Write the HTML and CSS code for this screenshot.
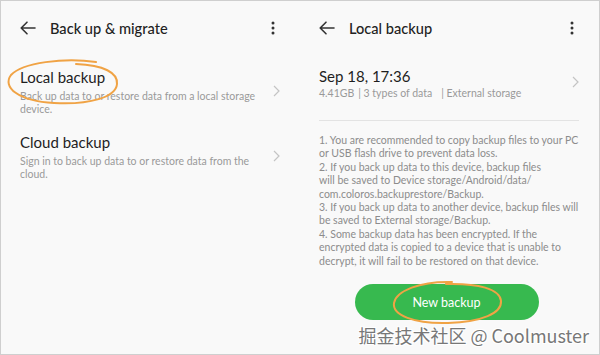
FILE: index.html
```html
<!DOCTYPE html>
<html>
<head>
<meta charset="utf-8">
<link rel="stylesheet" href="styles.css">
</head>
<body>
<div class="frame">
  <section class="panel">
    <header class="bar">
      <svg class="back" width="16" height="14" viewBox="0 0 16 14"><path d="M15 7H1.5M7 1.2L1.2 7 7 12.8" fill="none" stroke="#333" stroke-width="1.6" stroke-linecap="round" stroke-linejoin="round"/></svg>
      <h1 class="title">Back up &amp; migrate</h1>
      <svg class="more" width="4" height="14" viewBox="0 0 4 14"><circle cx="2" cy="2" r="1.5" fill="#333"/><circle cx="2" cy="7" r="1.5" fill="#333"/><circle cx="2" cy="12" r="1.5" fill="#333"/></svg>
    </header>
    <div class="item item-first">
      <div class="item-text">
        <div class="item-title">Local backup</div>
        <div class="item-sub">Back up data to or restore data from a local storage device.</div>
      </div>
      <svg class="chev" width="7" height="12" viewBox="0 0 7 12"><path d="M1 1l5 5-5 5" fill="none" stroke="#c4c4c4" stroke-width="1.2"/></svg>
      <svg class="ring ring-left" width="118" height="50" viewBox="0 0 118 50"><path d="M92 5C60 0 18 6 7 18 -2 30 14 44 50 46 86 48 112 40 113 27 114 16 100 8 72 7" fill="none" stroke="#f0a345" stroke-width="2" stroke-linecap="round"/></svg>
    </div>
    <div class="item">
      <div class="item-text">
        <div class="item-title">Cloud backup</div>
        <div class="item-sub">Sign in to back up data to or restore data from the cloud.</div>
      </div>
      <svg class="chev" width="7" height="12" viewBox="0 0 7 12"><path d="M1 1l5 5-5 5" fill="none" stroke="#c4c4c4" stroke-width="1.2"/></svg>
    </div>
  </section>
  <section class="panel">
    <header class="bar">
      <svg class="back" width="16" height="14" viewBox="0 0 16 14"><path d="M15 7H1.5M7 1.2L1.2 7 7 12.8" fill="none" stroke="#333" stroke-width="1.6" stroke-linecap="round" stroke-linejoin="round"/></svg>
      <h1 class="title">Local backup</h1>
      <svg class="more" width="4" height="14" viewBox="0 0 4 14"><circle cx="2" cy="2" r="1.5" fill="#333"/><circle cx="2" cy="7" r="1.5" fill="#333"/><circle cx="2" cy="12" r="1.5" fill="#333"/></svg>
    </header>
    <div class="record">
      <div class="item-text">
        <div class="item-title">Sep 18, 17:36</div>
        <div class="record-meta"><span>4.41GB</span><span class="sep">| 3 types of data</span><span class="sep sep-wide">| External storage</span></div>
      </div>
      <svg class="chev" width="7" height="12" viewBox="0 0 7 12"><path d="M1 1l5 5-5 5" fill="none" stroke="#c4c4c4" stroke-width="1.2"/></svg>
    </div>
    <div class="notes">
      1. You are recommended to copy backup files to your PC or USB flash drive to prevent data loss.<br>
      2. If you back up data to this device, backup files<br>will be saved to Device storage/Android/data/<br>com.coloros.backuprestore/Backup.<br>
      3. If you back up data to another device, backup files will be saved to External storage/Backup.<br>
      4. Some backup data has been encrypted. If the encrypted data is copied to a device that is unable to decrypt, it will fail to be restored on that device.
    </div>
    <div class="action">
      <button class="btn">New backup</button>
      <svg class="ring ring-btn" width="116" height="48" viewBox="0 0 116 48"><path d="M62 3C30 2 6 12 4 24 2 36 24 45 58 44 92 43 112 34 111 22 110 10 88 4 56 5" fill="none" stroke="#f0a345" stroke-width="2" stroke-linecap="round"/></svg>
    </div>
  </section>
  <div class="watermark">掘金技术社区 @ Coolmuster</div>
</div>
</body>
</html>
```
FILE: styles.css
```css
* { box-sizing: border-box; margin: 0; padding: 0; }
html, body { width: 600px; height: 355px; background: #fff; }
body {
  font-family: Lato, "Noto Sans", sans-serif;
  color: #222;
}
.frame {
  position: relative;
  width: 600px;
  height: 355px;
  border: 1px solid #cfcfcf;
  background: #f9f9f9;
  display: grid;
  grid-template-columns: 299px 299px;
  overflow: hidden;
}
.panel { display: flex; flex-direction: column; }
.bar {
  height: 54px;
  display: flex;
  align-items: center;
  padding: 0 25px 0 19px;
}
.back { flex: none; }
.title {
  flex: 1;
  margin-left: 14px;
  font-size: 14.6px;
  font-weight: 500;
  color: #222;
}
.more { flex: none; }
.item {
  position: relative;
  display: flex;
  align-items: center;
  padding: 12px 20px 0 19px;
}
.item-first { padding-top: 12px; }
.item + .item { padding-top: 16px; }
.item-text { flex: 1; }
.item-title {
  font-size: 15px;
  line-height: 20px;
  color: #1e1e1e;
}
.item-sub {
  margin-top: 3px;
  font-size: 10.5px;
  line-height: 13px;
  color: #9a9a9a;
  padding-right: 6px;
}
.chev { flex: none; margin-top: -2px; }
.ring { position: absolute; pointer-events: none; }
.ring-left { left: 3px; top: 2px; }
.record {
  display: flex;
  align-items: center;
  padding: 11px 0 20px 0;
  margin: 0 20px 0 19px;
  border-bottom: 1px solid #e3e3e3;
}
.record .chev { margin-top: -2px; }
.record-meta {
  margin-top: 1px;
  font-size: 10.5px;
  line-height: 13px;
  color: #999;
}
.sep { margin-left: 4px; }
.sep-wide { margin-left: 9px; }
.notes {
  margin: 13px 20px 0 19px;
  font-size: 10.5px;
  line-height: 13.4px;
  color: #8c8c8c;
}
.action {
  position: relative;
  display: flex;
  justify-content: center;
  margin-top: 16px;
}
.btn {
  width: 184px;
  height: 36px;
  border: none;
  border-radius: 18px;
  background: #37b94f;
  color: #fff;
  font-family: inherit;
  font-size: 12.5px;
  margin-right: 6px;
}
.ring-btn { left: 90px; top: -5px; }
.watermark {
  position: absolute;
  right: 10px;
  bottom: 6px;
  font-family: "Noto Sans CJK SC", "Noto Sans", sans-serif;
  font-size: 18px;
  color: #777;
  text-shadow: 1px 1px 0 #fff, -1px -1px 0 #fff, 1px -1px 0 #fff, -1px 1px 0 #fff;
}
```
